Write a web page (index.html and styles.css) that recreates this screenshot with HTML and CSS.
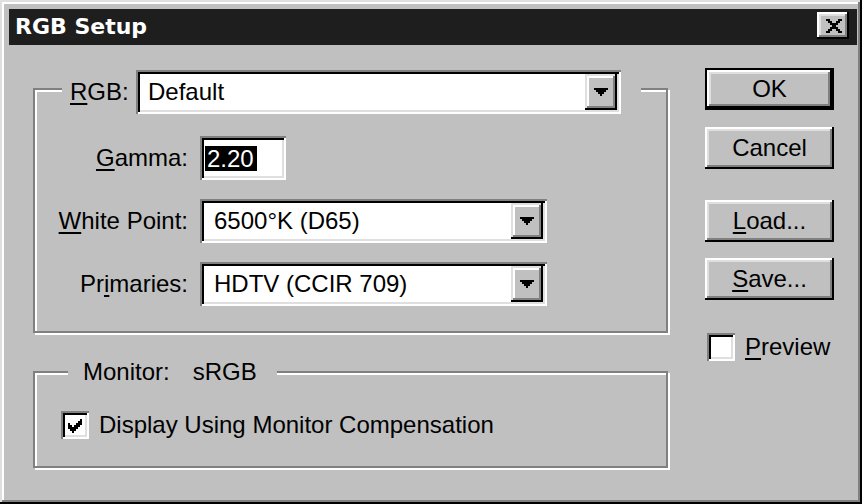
FILE: index.html
```html
<!DOCTYPE html>
<html>
<head>
<meta charset="utf-8">
<title>RGB Setup</title>
<link rel="stylesheet" href="styles.css">
</head>
<body>
<div class="window">
  <div class="titlebar">
    <span class="title">RGB Setup</span>
    <button class="close" aria-label="Close">
      <svg width="16" height="14" viewBox="0 0 8 7" shape-rendering="crispEdges"><path d="M0 0h2v1h-2z M6 0h2v1h-2z M1 1h2v1h-2z M5 1h2v1h-2z M2 2h4v1h-4z M3 3h2v1h-2z M2 4h4v1h-4z M1 5h2v1h-2z M5 5h2v1h-2z M0 6h2v1h-2z M6 6h2v1h-2z"/></svg>
    </button>
  </div>
  <div class="content">
    <div class="left">
      <div class="group group-rgb">
        <div class="group-head head-rgb">
          <span class="head-label"><u>R</u>GB:</span>
          <div class="combo sunken combo-rgb">
            <span class="combo-text">Default</span>
            <span class="drop"><svg width="14" height="8" viewBox="0 0 7 4" shape-rendering="crispEdges"><path d="M0 0h7v1h-1v1h-1v1h-1v1h-1v-1h-1v-1h-1v-1h-1z"/></svg></span>
          </div>
        </div>
        <div class="rows">
          <div class="row">
            <span class="label"><u>G</u>amma:</span>
            <div class="field sunken gamma"><span class="sel">2.20</span></div>
          </div>
          <div class="row">
            <span class="label"><u>W</u>hite Point:</span>
            <div class="combo sunken combo-field">
              <span class="combo-text">6500°K (D65)</span>
              <span class="drop"><svg width="14" height="8" viewBox="0 0 7 4" shape-rendering="crispEdges"><path d="M0 0h7v1h-1v1h-1v1h-1v1h-1v-1h-1v-1h-1v-1h-1z"/></svg></span>
            </div>
          </div>
          <div class="row">
            <span class="label">Pr<u>i</u>maries:</span>
            <div class="combo sunken combo-field">
              <span class="combo-text">HDTV (CCIR 709)</span>
              <span class="drop"><svg width="14" height="8" viewBox="0 0 7 4" shape-rendering="crispEdges"><path d="M0 0h7v1h-1v1h-1v1h-1v1h-1v-1h-1v-1h-1v-1h-1z"/></svg></span>
            </div>
          </div>
        </div>
      </div>
      <div class="group group-mon">
        <div class="group-head head-mon">Monitor:<span class="mon-val">sRGB</span></div>
        <div class="check-row display-row">
          <span class="checkbox sunken"><svg width="14" height="14" viewBox="0 0 7 7" shape-rendering="crispEdges"><path d="M0 2h1v3h-1z M1 3h1v3h-1z M2 4h1v3h-1z M3 3h1v3h-1z M4 2h1v3h-1z M5 1h1v3h-1z M6 0h1v3h-1z"/></svg></span>
          <span>Display Using Monitor Compensation</span>
        </div>
      </div>
    </div>
    <div class="right">
      <button class="btn default">OK</button>
      <button class="btn btn-cancel">Cancel</button>
      <button class="btn btn-load"><u>L</u>oad...</button>
      <button class="btn btn-save"><u>S</u>ave...</button>
      <div class="check-row preview-row">
        <span class="checkbox sunken"></span>
        <span><u>P</u>review</span>
      </div>
    </div>
  </div>
</div>
</body>
</html>
```

FILE: styles.css
```css
* { box-sizing: border-box; }

html, body {
  margin: 0;
  padding: 0;
  background: #ffffff;
}

body {
  font-family: "Liberation Sans", Arial, sans-serif;
  font-size: 24px;
  color: #000;
}

u {
  text-decoration-thickness: 2px;
  text-underline-offset: 3px;
}

.window {
  width: 862px;
  height: 504px;
  background: #c0c0c0;
  padding: 9px 5px 0 9px;
  box-shadow: inset -2px -2px 0 #000, inset 2px 2px 0 #dfdfdf,
              inset -4px -4px 0 #808080, inset 4px 4px 0 #fff;
}

.titlebar {
  height: 36px;
  background: #1e1e1e;
  display: flex;
  justify-content: space-between;
  align-items: flex-start;
  padding: 0 8px 0 6px;
}

.title {
  font-family: "DejaVu Sans", "Liberation Sans", sans-serif;
  font-weight: bold;
  font-size: 22px;
  line-height: 36px;
  color: #fff;
}

.close {
  width: 32px;
  height: 27px;
  margin-top: 3px;
  padding: 0;
  border: none;
  background: #c0c0c0;
  display: flex;
  align-items: center;
  justify-content: center;
  box-shadow: inset -2px -2px 0 #000, inset 2px 2px 0 #fff,
              inset -4px -4px 0 #808080, inset 4px 4px 0 #dfdfdf;
}

.close svg { margin-left: 1px; }

.content {
  display: flex;
  align-items: flex-start;
  padding-left: 24px;
}

.left {
  width: 635px;
  margin-top: 43px;
}

.right {
  width: 129px;
  margin-left: 37px;
  margin-top: 23px;
  display: flex;
  flex-direction: column;
}

/* group boxes */
.group {
  border: 2px solid #808080;
  box-shadow: inset 2px 2px 0 #fff, 2px 2px 0 #fff;
}

.group-head {
  background: #c0c0c0;
  width: fit-content;
}

.head-rgb {
  display: flex;
  align-items: center;
  margin: -20px 0 0 27px;
  padding: 0 20px 0 8px;
}

.head-label {
  width: 66px;
}

.rows {
  margin-top: 22px;
  padding-bottom: 25px;
}

.row {
  display: flex;
  align-items: center;
  height: 44px;
}

.row + .row { margin-top: 19px; }

.label {
  width: 153px;
  margin-right: 12px;
  text-align: right;
  white-space: nowrap;
}

.group-mon {
  margin-top: 38px;
  padding-bottom: 27px;
}

.head-mon {
  margin: -15px 0 0 33px;
  padding: 0 20px 0 15px;
  line-height: 28px;
  display: flex;
}

.mon-val { margin-left: 23px; }

/* sunken fields */
.sunken {
  background: #fff;
  box-shadow: inset 2px 2px 0 #808080, inset -2px -2px 0 #fff,
              inset 4px 4px 0 #000, inset -4px -4px 0 #dfdfdf;
}

.combo {
  display: flex;
  align-items: stretch;
  height: 44px;
  padding: 4px;
}

.combo-rgb { width: 485px; }
.combo-field { width: 347px; }

.combo-text {
  flex: 1;
  display: flex;
  align-items: center;
  padding-left: 10px;
  white-space: nowrap;
}

.combo-rgb .combo-text { padding-left: 8px; }

.drop {
  width: 32px;
  background: #c0c0c0;
  display: flex;
  align-items: center;
  justify-content: center;
  box-shadow: inset -2px -2px 0 #000, inset 2px 2px 0 #dfdfdf,
              inset -4px -4px 0 #808080, inset 4px 4px 0 #fff;
}

.field {
  height: 44px;
  padding: 4px 4px 4px 5px;
  display: flex;
  align-items: center;
}

.gamma { width: 86px; }

.sel {
  background: #000;
  color: #fff;
  line-height: 25px;
  padding: 0 3px 0 2px;
}

/* check boxes */
.check-row {
  display: flex;
  align-items: center;
  gap: 10px;
  white-space: nowrap;
}

.checkbox {
  width: 28px;
  height: 28px;
  padding: 4px 4px 6px 4px;
  display: flex;
  align-items: flex-end;
  justify-content: center;
  flex: none;
}

.display-row {
  margin-top: 25px;
  padding-left: 26px;
}

.preview-row {
  margin-top: 33px;
  padding-left: 2px;
}

/* push buttons */
.btn {
  width: 129px;
  height: 42px;
  padding: 0;
  border: none;
  background: #c0c0c0;
  font: inherit;
  color: #000;
  box-shadow: inset -2px -2px 0 #000, inset 2px 2px 0 #fff,
              inset -4px -4px 0 #808080, inset 4px 4px 0 #dfdfdf;
}

.btn.default { border: 2px solid #000; }

.btn-cancel { margin-top: 17px; }
.btn-load { margin-top: 31px; }
.btn-save { margin-top: 16px; }
```
